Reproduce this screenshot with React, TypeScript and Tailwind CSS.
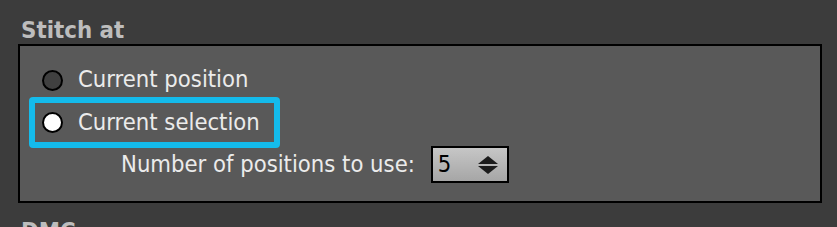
import React from "react";

const font = { fontFamily: "'DejaVu Sans Condensed', 'Open Sans', sans-serif" };

function Radio({ checked }: { checked?: boolean }) {
  return (
    <span
      className={
        "block w-[21px] h-[21px] shrink-0 rounded-full border-[2.5px] border-black " +
        (checked ? "bg-white" : "bg-[#404040]")
      }
    />
  );
}

function SpinArrows() {
  return (
    <svg width="22" height="20" viewBox="0 0 22 20" className="blur-[0.4px]">
      <path d="M11 1 L21 9 L1 9 Z" fill="#1c1c1c" />
      <path d="M1 11 L21 11 L11 19 Z" fill="#1c1c1c" />
    </svg>
  );
}

export default function App() {
  return (
    <div className="w-[837px] h-[227px] overflow-hidden bg-[#3c3c3c]" style={font}>
      <div className="pt-[17px] pl-[21px] text-[23.8px] leading-[26px] font-bold text-[#bdbdbd]">
        Stitch at
      </div>
      <div className="mt-[1px] ml-[18px] mr-[15px] border-2 border-black bg-[#595959] pt-[17px] pb-[18px] flex flex-col text-[23.6px] text-[#ebebeb]">
        <div className="h-[34px] pl-[22px] flex items-center gap-[15px]">
          <Radio />
          <span className="leading-none">Current position</span>
        </div>
        <div className="ml-[9px] w-[251px] h-[51px] border-[6px] border-[#14bbeb] rounded-[4px] pl-[7px] flex items-center gap-[15px]">
          <Radio checked />
          <span className="leading-none">Current selection</span>
        </div>
        <div className="-mt-[2px] pl-[101px] flex items-center gap-[16px]">
          <span className="leading-none">Number of positions to use:</span>
          <div className="w-[78px] h-[37px] border-2 border-black bg-gradient-to-b from-[#c6c6c6] to-[#a6a6a6] flex items-center justify-between pl-[5px] pr-[8px]">
            <span className="text-black leading-none">5</span>
            <SpinArrows />
          </div>
        </div>
      </div>
      <div className="mt-[15px] pl-[21px] text-[23.8px] leading-[26px] font-bold text-[#bdbdbd]">
        DMC
      </div>
    </div>
  );
}
